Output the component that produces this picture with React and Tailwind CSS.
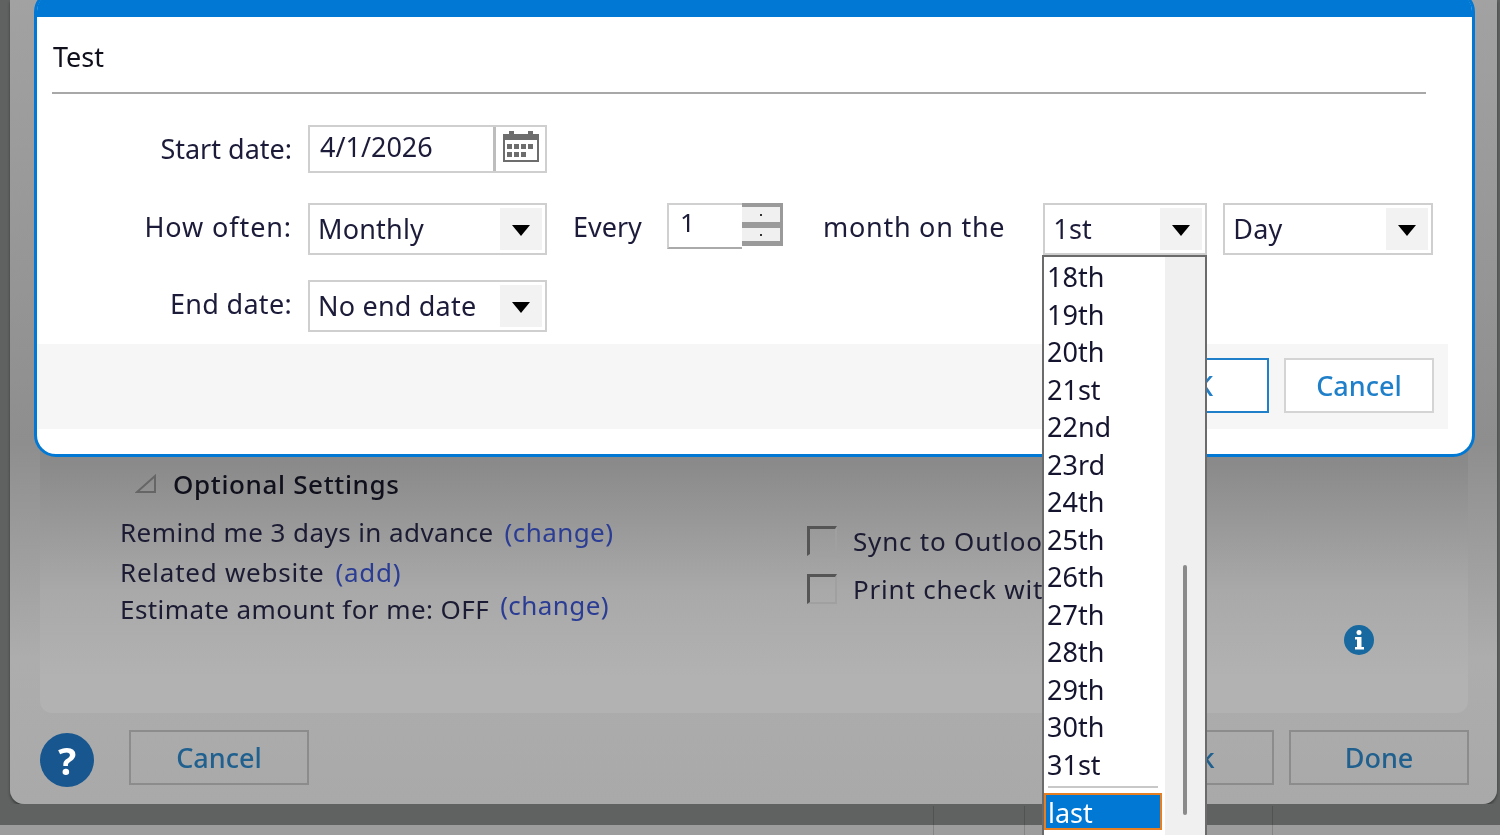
const font = { fontFamily: '"Noto Sans", "Open Sans", sans-serif' };

function Arrow() {
  return (
    <div className="flex h-[42px] w-[42px] items-center justify-center bg-[#f2f2f2] pt-[2px]">
      <svg width="18" height="11" viewBox="0 0 18 11"><path d="M0 0h18L9 11z" fill="#000" /></svg>
    </div>
  );
}

function Select({ value, w }) {
  return (
    <div className={`flex h-[52px] ${w} items-center justify-between border-2 border-[#cfcfcf] bg-white pr-[3px]`}>
      <span className="mb-[1px] pl-[8px] text-[27px] leading-none tracking-[0.2px] text-[#1c1c3a]">{value}</span>
      <Arrow />
    </div>
  );
}

function Calendar() {
  return (
    <svg width="38" height="34" viewBox="0 0 38 34">
      <path d="M1 5h6V2h5v3h14V2h5v3h6v28H1z" fill="#6d6d6d" />
      <rect x="3" y="11" width="32" height="20" fill="#fff" />
      {[5, 12, 19, 26].map((x) => <rect key={x} x={x} y="15" width="5" height="5" fill="#6d6d6d" />)}
      {[5, 12, 19].map((x) => <rect key={x} x={x} y="23" width="5" height="5" fill="#6d6d6d" />)}
    </svg>
  );
}

function Spinner() {
  return (
    <div className="flex flex-col self-start">
      <div className="flex h-[25px] w-[41px] items-center justify-center border-t-[4px] border-r-[3px] border-b-[6px] border-[#9a9a9a] bg-[#f0f0f0]">
        <span className="h-[2px] w-[2px] bg-[#333]" />
      </div>
      <div className="flex h-[18px] w-[41px] items-center justify-center border-r-[3px] border-b-[5px] border-[#9a9a9a] bg-[#f0f0f0]">
        <span className="h-[2px] w-[2px] bg-[#333]" />
      </div>
    </div>
  );
}

function Label({ children, className }) {
  return (
    <span className={`w-[238px] text-right text-[27px] leading-none text-[#1c1c3a] ${className}`}>
      {children}
    </span>
  );
}

function Checkbox({ label }) {
  return (
    <div className="flex items-center gap-[16px]">
      <span className="h-[30px] w-[30px] border-2 border-t-[3px] border-l-[3px] border-[#a0a0a0] border-t-[#555] border-l-[#555]" />
      <span className="whitespace-nowrap text-[26px] leading-none tracking-[0.8px] text-[#1b1b33]">{label}</span>
    </div>
  );
}

function FooterButton({ children, className }) {
  return (
    <button className={`flex h-[55px] items-center justify-center border-2 border-[#8c8c8c] text-[27px] font-medium leading-none text-[#20608f] ${className}`}>
      {children}
    </button>
  );
}

const days = ["18th", "19th", "20th", "21st", "22nd", "23rd", "24th", "25th", "26th", "27th", "28th", "29th", "30th", "31st"];

export default function App() {
  return (
    <div className="relative h-[835px] w-[1500px] overflow-hidden bg-[#5f6261]" style={font}>
      {/* page behind the dialogs */}
      <div className="flex h-[835px] flex-col blur-[0.6px]">
        <div className="ml-[10px] flex h-[804px] w-[1487px] flex-col rounded-b-[14px] bg-[linear-gradient(#a2a2a2,#8e8e8e_55%,#adadad_82%,#a9a9a9)] shadow-[0_2px_3px_rgba(0,0,0,0.4)]">
          <div className="ml-[30px] h-[713px] w-[1428px] rounded-b-[12px] bg-[linear-gradient(#707070,#8a8a8a_65%,#a9a9a9_83%,#b2b2b2_95%)] pt-[471px]">
            <div className="flex">
              <div className="w-[767px] pl-[80px]">
                <div className="flex items-center pl-[15px]">
                  <svg width="22" height="20" viewBox="0 0 22 20"><path d="M20 2v16H2z" fill="none" stroke="#666" strokeWidth="2" /></svg>
                  <span className="ml-[16px] text-[26px] font-medium leading-none tracking-[0.65px] text-[#10101c]">Optional Settings</span>
                </div>
                <div className="mt-[22px] text-[26px] leading-none tracking-[0.42px] text-[#1b1b33]">
                  <div className="flex gap-[11px]">
                    <span>Remind me 3 days in advance</span>
                    <span className="text-[#2a3c94]">(change)</span>
                  </div>
                  <div className="mt-[14px] flex gap-[11px] tracking-[0.75px]">
                    <span>Related website</span>
                    <span className="text-[#2a3c94]">(add)</span>
                  </div>
                  <div className="mt-[11px] flex gap-[11px]">
                    <span>Estimate amount for me: OFF</span>
                    <span className="-mt-[4px] text-[#2a3c94]">(change)</span>
                  </div>
                </div>
              </div>
              <div className="flex-1 pt-[55px]">
                <div className="flex flex-col gap-[18px]">
                  <Checkbox label="Sync to Outlook" />
                  <Checkbox label="Print check with" />
                </div>
              </div>
              <div className="pr-[94px] pt-[154px]">
                <svg width="30" height="30" viewBox="0 0 30 30">
                  <circle cx="15" cy="15" r="15" fill="#17699f" />
                  <rect x="12.5" y="5" width="5" height="5" rx="2.5" fill="#fff" />
                  <path d="M11 12h6.500v10H20v2.500h-9V22h2v-7.500h-2z" fill="#fff" />
                </svg>
              </div>
            </div>
          </div>
          <div className="mt-[17px] flex items-start pl-[30px] pr-[28px]">
            <span className="mt-[3px] flex h-[54px] w-[54px] items-center justify-center rounded-full bg-[#17568f] text-[38px] font-bold leading-none text-white">?</span>
            <FooterButton className="ml-[35px] w-[180px]">Cancel</FooterButton>
            <div className="flex-1" />
            <FooterButton className="w-[180px]">Back</FooterButton>
            <FooterButton className="ml-[15px] w-[180px]">Done</FooterButton>
          </div>
        </div>
        <div className="flex h-[31px] bg-[linear-gradient(#5f6261_21px,#9d9d9d_21px)] pt-[2px]">
          <div className="w-[934px] border-r border-black/15" />
          <div className="w-[91px] border-r border-black/15" />
          <div className="w-[248px] border-r border-black/15" />
        </div>
      </div>

      {/* recurrence dialog */}
      <div className="absolute -top-[10px] left-[34px] h-[467px] w-[1441px] rounded-[22px] border-[3px] border-[#0078d4] bg-white blur-[0.3px]">
        <div className="h-[24px] rounded-t-[18px] bg-[#0078d4]" />
        <div className="pl-[16px] pt-[26px] text-[27px] leading-none text-[#10101c]">Test</div>
        <div className="ml-[15px] mt-[22px] h-[2px] w-[1374px] bg-[#a8a8a8]" />
        <div className="mt-[31px] flex items-center pl-[17px]">
          <Label className="mb-[2px]">Start date:</Label>
          <div className="ml-[16px] flex h-[48px] w-[239px] border-2 border-[#cfcfcf]">
            <span className="w-[183px] pl-[10px] pt-[6px] text-[27px] leading-none text-[#1c1c3a]">4/1/2026</span>
            <span className="flex flex-1 items-start justify-center border-l-[3px] border-[#bdbdbd] pt-[2px]"><Calendar /></span>
          </div>
        </div>
        <div className="mt-[30px] flex items-center pl-[17px]">
          <Label className="mb-[5px] tracking-[0.9px]">How often:</Label>
          <div className="ml-[16px]"><Select value="Monthly" w="w-[239px]" /></div>
          <span className="mb-[5px] ml-[26px] text-[27px] leading-none text-[#1c1c3a]">Every</span>
          <div className="ml-[25px] flex self-start">
            <div className="h-[46px] w-[75px] self-start border-t-2 border-b-2 border-l-2 border-[#d0d0d0] border-b-[#aaa] pl-[11px] pt-[4px] text-[26px] leading-none text-[#1c1c3a]">1</div>
            <Spinner />
          </div>
          <span className="mb-[5px] ml-[40px] text-[27px] leading-none tracking-[0.75px] text-[#1c1c3a]">month on the</span>
          <div className="ml-[38px]"><Select value="1st" w="w-[164px]" /></div>
          <div className="ml-[16px]"><Select value="Day" w="w-[210px]" /></div>
        </div>
        <div className="mt-[25px] flex items-center pl-[17px]">
          <Label className="mb-[5px] tracking-[0.3px]">End date:</Label>
          <div className="ml-[16px]"><Select value="No end date" w="w-[239px]" /></div>
        </div>
        <div className="mt-[12px] flex h-[85px] w-[1411px] items-center justify-end gap-[15px] bg-[#f6f6f6] pb-[2px] pr-[14px]">
          <button className="h-[55px] w-[150px] border-2 border-[#1f7fc9] bg-white text-[27px] font-medium leading-none text-[#1f7fc9]">OK</button>
          <button className="h-[55px] w-[150px] border-2 border-[#d4d4d4] bg-white text-[27px] font-medium leading-none text-[#1f7fc9]">Cancel</button>
        </div>
      </div>

      {/* open day list */}
      <div className="absolute left-[1042px] top-[255px] flex h-[590px] w-[165px] border-2 border-[#6b6b6b] bg-white blur-[0.3px]">
        <div className="w-[121px] pl-[3px] pt-[1px] text-[27px] leading-[37.5px] text-[#14142e]">
          {days.map((d) => <div key={d}>{d}</div>)}
          <div className="ml-[1px] mt-[3px] h-[2px] w-[110px] bg-[#c8c8c8]" />
          <div className="ml-[-3px] mt-[5px] h-[37px] w-[118px] border-2 border-[#e67e22] bg-[#0078d4] pl-[2px] text-[27px] leading-[36px] text-white">last</div>
        </div>
        <div className="flex-1 bg-[#f0f0f0] pl-[18px] pt-[308px]">
          <div className="h-[250px] w-[4px] rounded-full bg-[#8a8a8a]" />
        </div>
      </div>
    </div>
  );
}
